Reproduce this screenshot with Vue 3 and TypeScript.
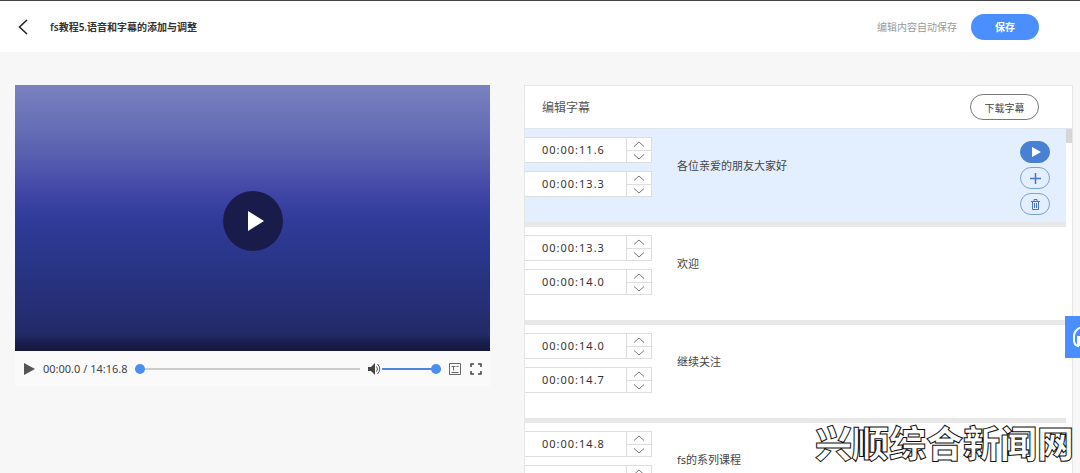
<script setup lang="ts">
import { ref } from 'vue'

interface Caption {
  id: number
  start: string
  end: string
  text: string
}

const captions = ref<Caption[]>([
  { id: 1, start: '00:00:11.6', end: '00:00:13.3', text: '各位亲爱的朋友大家好' },
  { id: 2, start: '00:00:13.3', end: '00:00:14.0', text: '欢迎' },
  { id: 3, start: '00:00:14.0', end: '00:00:14.7', text: '继续关注' },
  { id: 4, start: '00:00:14.8', end: '00:00:16.0', text: 'fs的系列课程' },
])
const activeId = ref(1)
const position = ref(0)
const volume = ref(100)
const fields = [
  { key: 'start', label: '开始时间' },
  { key: 'end', label: '结束时间' },
] as const
</script>

<template>
  <div class="page">
    <header class="topbar">
      <button class="back" type="button" aria-label="返回">
        <svg viewBox="0 0 10 16" width="10" height="16"><path d="M9 1 1.5 8 9 15" /></svg>
      </button>
      <h1>fs教程5.语音和字幕的添加与调整</h1>
      <span class="autosave">编辑内容自动保存</span>
      <button class="save" type="button">保存</button>
    </header>

    <main class="content">
      <section class="player">
        <div class="video">
          <button class="big-play" type="button" aria-label="播放视频">
            <svg viewBox="0 0 18 20" width="18" height="20"><path d="M1 0 17 10 1 20z" /></svg>
          </button>
        </div>
        <div class="controls">
          <button class="icon" type="button" aria-label="播放">
            <svg viewBox="0 0 11 12" width="11" height="12"><path d="M0 0 11 6 0 12z" fill="#555" /></svg>
          </button>
          <span class="clock">00:00.0 / 14:16.8</span>
          <input v-model="position" class="seek" type="range" min="0" max="100" aria-label="播放进度" />
          <button class="icon mute" type="button" aria-label="静音">
            <svg viewBox="0 0 13 12" width="13" height="12">
              <path d="M0 4h3l4-4v12L3 8H0z" fill="#444" />
              <path d="M8.500 3.500q2 2.500 0 5M9.500 1q4.500 5 0 10" fill="none" stroke="#555" />
            </svg>
          </button>
          <input v-model="volume" class="volume" type="range" min="0" max="100" aria-label="音量" />
          <button class="icon caption-toggle" type="button" aria-label="字幕">
            <svg viewBox="0 0 12 12" width="12" height="12" fill="none" stroke="#666">
              <path d="M.5.5h11v11H.5zM2.500 3.500h4M4.500 3.500v4M7.500 3.500h2M2.500 9.500h7" />
            </svg>
          </button>
          <button class="icon" type="button" aria-label="全屏">
            <svg viewBox="0 0 12 12" width="12" height="12" fill="none" stroke="#444" stroke-width="1.500">
              <path d="M1 4V1h3M8 1h3v3M11 8v3H8M4 11H1V8" />
            </svg>
          </button>
        </div>
      </section>

      <section class="panel">
        <div class="panel-head">
          <h2>编辑字幕</h2>
          <button class="download" type="button">下载字幕</button>
        </div>
        <div class="list">
          <ul>
            <li v-for="c in captions" :key="c.id" :class="{ active: c.id === activeId }" @click="activeId = c.id">
              <div class="times">
                <div v-for="f in fields" :key="f.key" class="time">
                  <input v-model="c[f.key]" type="text" :aria-label="f.label" />
                  <div class="steps">
                    <button type="button" aria-label="增加">
                      <svg viewBox="0 0 12 6" width="12" height="6"><path d="M1 5.500 6 1l5 4.500" /></svg>
                    </button>
                    <button type="button" aria-label="减少">
                      <svg viewBox="0 0 12 6" width="12" height="6"><path d="M1 .5 6 5 11 .5" /></svg>
                    </button>
                  </div>
                </div>
              </div>
              <p>{{ c.text }}</p>
              <div v-if="c.id === activeId" class="actions">
                <button class="filled" type="button" aria-label="播放字幕">
                  <svg viewBox="0 0 10 10" width="10" height="10"><path d="M1 0 10 5 1 10z" fill="#fff" /></svg>
                </button>
                <button type="button" aria-label="添加字幕">
                  <svg viewBox="0 0 11 11" width="11" height="11" fill="none" stroke="#4577c4" stroke-width="1.500"><path d="M5.500 0v11M0 5.500h11" /></svg>
                </button>
                <button type="button" aria-label="删除字幕">
                  <svg viewBox="0 0 9 11" width="9" height="11" fill="none" stroke="#4a72c4"><path d="M0 2.500h9M3 2V.5h3V2M1.500 3v7.500h6V3M3.500 4v5M5.500 4v5" /></svg>
                </button>
              </div>
            </li>
          </ul>
          <div class="track"><div class="thumb"></div></div>
        </div>
      </section>
    </main>

    <button class="support" type="button" aria-label="在线客服">
      <svg viewBox="0 0 24 24" width="24" height="24" fill="none" stroke="#fff" stroke-width="2">
        <path d="M2 15V11a10 9 0 0 1 20 0v4M6 11v10q-4-1-4-6M6 12h2v8H6M18 11v10q4-1 4-6M18 12h-2v8h2" />
      </svg>
    </button>
    <div class="watermark">兴顺综合新闻网</div>
  </div>
</template>

<style>
body {
  margin: 0;
  background: #f7f7f7;
}
</style>

<style scoped>
* {
  box-sizing: border-box;
}
.page {
  position: relative;
  display: flex;
  flex-direction: column;
  height: 100vh;
  overflow: hidden;
  border-top: 1px solid #444;
  background: #f7f7f7;
  color: #444;
  font-family: "Noto Sans", "Noto Sans CJK SC", sans-serif;
  font-size: 11px;
}
button,
input {
  margin: 0;
  padding: 0;
  border: 0;
  background: none;
  color: inherit;
  font: inherit;
}
button {
  display: flex;
  align-items: center;
  justify-content: center;
  cursor: pointer;
}
svg {
  display: block;
}
h1,
h2,
p,
ul {
  margin: 0;
  padding: 0;
}
.topbar {
  display: flex;
  flex: none;
  align-items: center;
  height: 51px;
  padding: 0 41px 0 18px;
  background: #fff;
}
.back {
  margin-right: 22px;
}
.back path {
  fill: none;
  stroke: #222;
  stroke-width: 1.5;
}
h1 {
  flex: 1;
  font-size: 10px;
  font-weight: 600;
  color: #333;
}
.autosave {
  margin-right: 14px;
  font-size: 10px;
  color: #999;
}
.save {
  width: 68px;
  height: 26px;
  border-radius: 13px;
  background: #4b8fff;
  color: #fff;
  font-size: 10px;
  font-weight: 700;
}
.content {
  display: grid;
  flex: 1;
  grid-template-columns: 475fr 549fr;
  gap: 34px;
  min-height: 0;
  padding: 33px 7px 0 15px;
}
.video {
  display: flex;
  align-items: center;
  justify-content: center;
  aspect-ratio: 475 / 266;
  background: linear-gradient(#7b82bf 0%, #5a62b0 25%, #4246a6 40%, #303b99 51%, #2a3689 65%, #252e73 85%, #222a66 94%, #191d4c 97%, #18183f 100%);
}
.big-play {
  width: 60px;
  height: 60px;
  margin-top: 6px;
  border-radius: 50%;
  background: #191c4b;
}
.big-play svg {
  margin-left: 6px;
}
.big-play path {
  fill: #fff;
}
.controls {
  display: flex;
  align-items: center;
  height: 35px;
  padding: 0 8px 0 9px;
  background: #fafafa;
}
.clock {
  width: 84px;
  margin: 0 8px;
  font-size: 11px;
  white-space: nowrap;
}
input[type="range"] {
  height: 12px;
  appearance: none;
}
input[type="range"]::-webkit-slider-runnable-track {
  height: 2px;
  background: #ccc;
}
input[type="range"]::-webkit-slider-thumb {
  width: 10px;
  height: 10px;
  margin-top: -4px;
  appearance: none;
  border-radius: 50%;
  background: #4b8ff5;
}
.seek {
  flex: 1;
  min-width: 0;
}
.mute {
  margin: 0 1px 0 8px;
}
.volume {
  width: 59px;
}
input.volume::-webkit-slider-runnable-track {
  background: #4b86dd;
}
.caption-toggle {
  margin: 0 9px 0 8px;
}
.panel {
  display: flex;
  flex-direction: column;
  min-height: 0;
  border: 1px solid #e6e6e6;
  border-bottom: 0;
  background: #fff;
}
.panel-head {
  display: flex;
  flex: none;
  align-items: center;
  justify-content: space-between;
  height: 43px;
  padding: 0 33px 0 17px;
  border-bottom: 1px solid #dfe6ee;
}
h2 {
  font-size: 12px;
  font-weight: 400;
  color: #555;
}
.download {
  width: 69px;
  height: 26px;
  border: 1px solid #777;
  border-radius: 13px;
  font-size: 10px;
}
.list {
  display: flex;
  flex: 1;
  min-height: 0;
  overflow: hidden;
}
ul {
  flex: 1;
  list-style: none;
}
li {
  display: flex;
  height: 98px;
  border-bottom: 5px solid #e8e8e8;
}
li.active {
  background: #e3efff;
}
.times {
  display: flex;
  flex-direction: column;
  gap: 8px;
  padding-top: 8px;
}
.time {
  display: flex;
  width: 127px;
  height: 26px;
  border: 1px solid #ddd;
  border-left: 0;
  background: #fff;
}
.time input {
  width: 101px;
  padding: 0 0 2px 17px;
  color: #333;
  letter-spacing: 1px;
}
.steps {
  display: grid;
  flex: 1;
  grid-template-rows: 1fr 1fr;
  border-left: 1px solid #ddd;
}
.steps button + button {
  border-top: 1px solid #ddd;
}
.steps path {
  fill: none;
  stroke: #777;
}
p {
  flex: 1;
  padding: 28px 25px 0;
  line-height: 18px;
}
.actions {
  display: flex;
  flex-direction: column;
  gap: 4px;
  padding: 12px 16px 0 0;
}
.actions button {
  width: 30px;
  height: 22px;
  border: 1px solid #7d9fd6;
  border-radius: 11px;
}
.actions .filled {
  padding-left: 2px;
  border-color: #4a80d4;
  background: #4a80d4;
}
.track {
  width: 6px;
}
.thumb {
  height: 14px;
  background: #d6d6d6;
}
.support {
  position: absolute;
  top: 315px;
  right: 0;
  justify-content: flex-start;
  width: 15px;
  height: 42px;
  padding-left: 7px;
  overflow: hidden;
  background: #4b8fff;
}
.support svg {
  flex: none;
}
.watermark {
  position: absolute;
  right: 6px;
  bottom: 7px;
  color: #fff;
  font-family: "Noto Sans CJK SC", sans-serif;
  font-size: 37px;
  font-weight: 900;
  line-height: 48px;
  -webkit-text-stroke: 1px #111;
}
</style>
